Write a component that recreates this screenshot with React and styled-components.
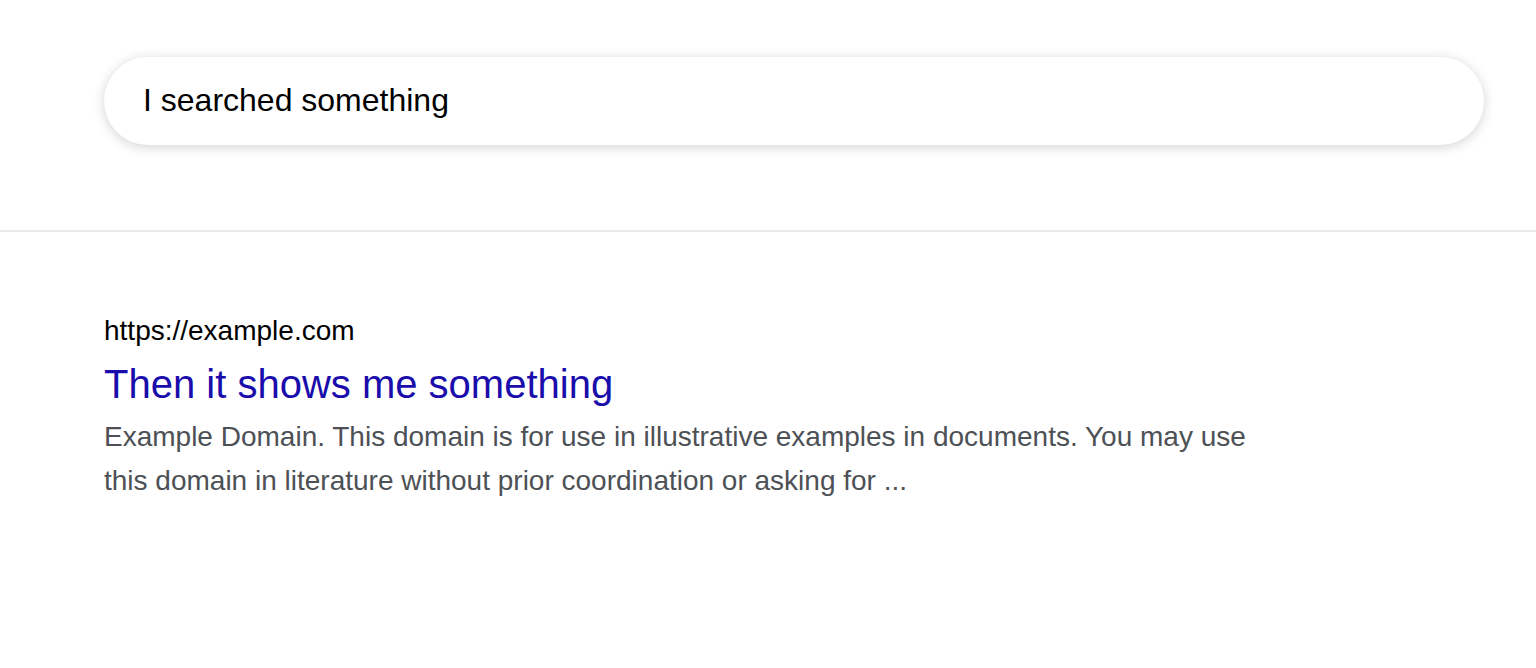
import React from "react";
import styled, { createGlobalStyle } from "styled-components";

const Global = createGlobalStyle`
  html, body { margin: 0; padding: 0; background: #fff; }
  body { font-family: "Liberation Sans", Arial, sans-serif; }
`;

const Page = styled.div`
  width: 100%;
  min-height: 668px;
  background: #fff;
`;

const Header = styled.header`
  padding: 57px 52px 85px 104px;
  border-bottom: 2px solid #ebebeb;
`;

const SearchBox = styled.div`
  height: 88px;
  box-sizing: border-box;
  border-radius: 44px;
  background: #fff;
  box-shadow: 0 2px 12px rgba(32, 33, 36, 0.2);
  display: flex;
  align-items: center;
  padding: 0 40px 2px 39px;
`;

const SearchInput = styled.input`
  border: none;
  outline: none;
  background: transparent;
  width: 100%;
  padding: 0;
  font-family: "Liberation Sans", Arial, sans-serif;
  font-size: 32px;
  color: #000;
`;

const Results = styled.main`
  padding: 83px 0 0 104px;
`;

const Result = styled.article`
  max-width: 1160px;
  display: flex;
  flex-direction: column;
`;

const Url = styled.div`
  font-size: 28px;
  line-height: 32px;
  color: #000;
`;

const Title = styled.a`
  font-size: 40px;
  line-height: 52px;
  color: #1a0dab;
  text-decoration: none;
  margin-top: 11px;
`;

const Snippet = styled.p`
  margin: 5px 0 0;
  font-size: 28px;
  line-height: 44px;
  color: #4d5156;
`;

export default function App() {
  return (
    <Page>
      <Global />
      <Header>
        <SearchBox>
          <SearchInput defaultValue="I searched something" readOnly />
        </SearchBox>
      </Header>
      <Results>
        <Result>
          <Url>https://example.com</Url>
          <Title href="#">Then it shows me something</Title>
          <Snippet>
            Example Domain. This domain is for use in illustrative examples in
            documents. You may use this domain in literature without prior
            coordination or asking for ...
          </Snippet>
        </Result>
      </Results>
    </Page>
  );
}
